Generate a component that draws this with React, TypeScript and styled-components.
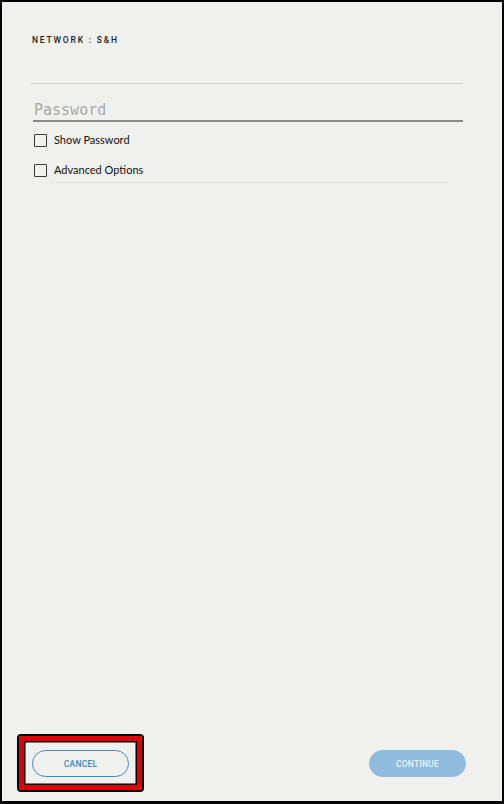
import React from "react";
import styled, { createGlobalStyle } from "styled-components";

const GlobalStyle = createGlobalStyle`
  html, body {
    margin: 0;
    padding: 0;
    background: #000;
  }
  * {
    box-sizing: border-box;
  }
`;

const Frame = styled.div`
  width: 504px;
  height: 804px;
  border-style: solid;
  border-color: #000;
  border-width: 2px 2px 3px 2px;
  background: #f0f0ee;
  display: flex;
  flex-direction: column;
  font-family: Lato, "Open Sans", sans-serif;
  color: #222;
`;

const Content = styled.div`
  flex: 1;
  display: flex;
  flex-direction: column;
  padding: 32px 39px 0 29px;
`;

const Title = styled.div`
  font-family: Roboto, "Liberation Sans", sans-serif;
  font-size: 8.5px;
  font-weight: 500;
  letter-spacing: 1.8px;
  color: #222;
  line-height: 12px;
  padding-left: 1px;
`;

const Rule = styled.div<{ $tone: string; $thick: number }>`
  height: ${(p) => p.$thick}px;
  background: ${(p) => p.$tone};
`;

const TopRule = styled(Rule)`
  margin-top: 37px;
`;

const PasswordField = styled.input`
  margin: 17px 0 0 2px;
  width: calc(100% - 2px);
  border: none;
  border-bottom: 2px solid #8a8a8a;
  background: transparent;
  font-family: "DejaVu Sans Mono", "Liberation Mono", monospace;
  font-size: 15px;
  line-height: 18px;
  padding: 0 0 1px 1px;
  outline: none;
  color: #333;
  &::placeholder {
    color: #a9a9a9;
  }
`;

const OptionList = styled.div`
  display: flex;
  flex-direction: column;
  gap: 12px;
  margin-top: 9px;
  padding-left: 3px;
`;

const Option = styled.label`
  display: flex;
  align-items: center;
  gap: 7px;
  font-size: 11px;
  line-height: 18px;
  color: #111;
`;

const Box = styled.span`
  width: 13px;
  height: 13px;
  border: 1.5px solid #3a3a3a;
  border-radius: 1px;
  background: transparent;
`;

const SoftRule = styled(Rule)`
  margin: 3px 15px 0 19px;
`;

const Footer = styled.div`
  display: flex;
  justify-content: space-between;
  align-items: center;
  padding: 0 36px 24px 30px;
`;

const CancelWrap = styled.div`
  position: relative;
`;

const Highlight = styled.div`
  position: absolute;
  left: -13px;
  top: -14px;
  width: 123px;
  height: 54px;
  border: 5px solid #e00000;
  border-radius: 2px;
  box-shadow: 0 0 0 2px #000, inset 0 0 0 1.5px #000;
  pointer-events: none;
`;

const Pill = styled.button<{ $filled?: boolean }>`
  width: 97px;
  height: 27px;
  border-radius: 14px;
  font-family: Roboto, "Liberation Sans", sans-serif;
  font-size: 8.5px;
  font-weight: 500;
  letter-spacing: 0.2px;
  cursor: pointer;
  border: 1.5px solid ${(p) => (p.$filled ? "#8fbcdc" : "#3b8ad0")};
  background: ${(p) => (p.$filled ? "#8fbcdc" : "transparent")};
  color: ${(p) => (p.$filled ? "#eaf2f8" : "#3b86c8")};
`;

export default function App() {
  return (
    <>
      <GlobalStyle />
      <Frame>
        <Content>
          <Title>NETWORK : S&amp;H</Title>
          <TopRule $tone="#d2d2d0" $thick={1} />
          <PasswordField type="password" placeholder="Password" />
          <OptionList>
            <Option>
              <Box />
              Show Password
            </Option>
            <Option>
              <Box />
              Advanced Options
            </Option>
          </OptionList>
          <SoftRule $tone="#e2e2e0" $thick={1} />
        </Content>
        <Footer>
          <CancelWrap>
            <Highlight />
            <Pill>CANCEL</Pill>
          </CancelWrap>
          <Pill $filled>CONTINUE</Pill>
        </Footer>
      </Frame>
    </>
  );
}
